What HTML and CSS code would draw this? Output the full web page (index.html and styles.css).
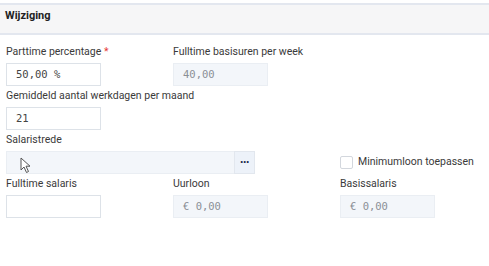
FILE: index.html
```html
<!DOCTYPE html>
<html>
<head>
  <meta name="viewport" content="width=device-width, initial-scale=1">
  <title>Wijziging</title>
  <link rel="stylesheet" href="styles.css">
</head>
<body>
  <header class="panel-header"><h3>Wijziging</h3></header>
  <section class="form">
    <div class="row">
      <div class="field">
        <label>Parttime percentage <span class="required">*</span></label>
        <div class="input">50,00 %</div>
      </div>
      <div class="field">
        <label>Fulltime basisuren per week</label>
        <div class="input disabled">40,00</div>
      </div>
    </div>
    <div class="row">
      <div class="field wide">
        <label>Gemiddeld aantal werkdagen per maand</label>
        <div class="input">21</div>
      </div>
    </div>
    <div class="row">
      <div class="field double">
        <label>Salaristrede</label>
        <div class="lookup">
          <div class="input disabled lookup-value"></div>
          <button type="button" class="lookup-button">&middot;&middot;&middot;</button>
          <!-- mouse pointer that was in the screenshot -->
          <svg class="cursor" width="12" height="17" viewBox="0 0 12 17">
            <path d="M1 1 L1 13 L4 10 L6.5 15.5 L8.5 14.5 L6 9.2 L10 9.2 Z" fill="#fff" stroke="#555" stroke-width="1" stroke-linejoin="round"/>
          </svg>
        </div>
      </div>
      <div class="field checkbox-field">
        <label class="check"><span class="box"></span>Minimumloon toepassen</label>
      </div>
    </div>
    <div class="row last">
      <div class="field">
        <label>Fulltime salaris</label>
        <div class="input"></div>
      </div>
      <div class="field">
        <label>Uurloon</label>
        <div class="input disabled">&euro; 0,00</div>
      </div>
      <div class="field">
        <label>Basissalaris</label>
        <div class="input disabled">&euro; 0,00</div>
      </div>
    </div>
  </section>
</body>
</html>
```

FILE: styles.css
```css
html, body {
  margin: 0;
  background-color: white;
}

body {
  font-family: Roboto, "Noto Sans", sans-serif;
  font-size: 10.5px;
  color: #3a3a3a;
}

.panel-header {
  margin-top: 3px;
  height: 28px;
  padding: 0 5px;
  background-color: #f6f6f7;
  border-top: 2px solid #e3e7ef;
  border-bottom: 2px solid #e3e7ef;
}

.panel-header h3 {
  margin: 0;
  padding-top: 4px;
  font-size: 11px;
  font-weight: bold;
  color: #222;
}

.form {
  padding: 10px 6px 0 6px;
}

.row {
  display: grid;
  grid-template-columns: 167px 167px 167px;
  margin-bottom: 3px;
}

.row.last {
  margin-top: 1px;
}

.field label {
  display: block;
  line-height: 14px;
  margin-bottom: 4px;
  white-space: nowrap;
}

.field.wide {
  grid-column: span 2;
}

.field.double {
  grid-column: span 2;
}

.required {
  color: #e53935;
}

.input {
  box-sizing: border-box;
  width: 95px;
  height: 23px;
  padding: 0 9px;
  border: 1px solid #dde2e8;
  background-color: white;
  font-family: "DejaVu Sans Mono", monospace;
  font-size: 10.5px;
  line-height: 21px;
  color: #444;
}

.input.disabled {
  background-color: #f3f6fa;
  border-color: #eaeef3;
  color: #8a8f96;
}

.lookup {
  position: relative;
  display: flex;
  width: 249px;
}

.lookup-value {
  flex: 1;
  width: auto;
  border-right: none;
}

.lookup-button {
  width: 21px;
  height: 23px;
  padding: 0;
  border: 1px solid #e2e7ee;
  background-color: #edf2f9;
  color: #1d2c4c;
  font-size: 12px;
  font-weight: bold;
  letter-spacing: -1px;
  line-height: 21px;
}

.cursor {
  position: absolute;
  left: 14px;
  top: 6px;
}

.checkbox-field {
  display: flex;
  align-items: flex-end;
}

.check {
  display: flex !important;
  align-items: center;
  margin-bottom: 5px !important;
}

.box {
  display: inline-block;
  width: 11px;
  height: 11px;
  margin-right: 5px;
  border: 1px solid #d3d7dd;
  border-radius: 2px;
  background-color: white;
}
```
